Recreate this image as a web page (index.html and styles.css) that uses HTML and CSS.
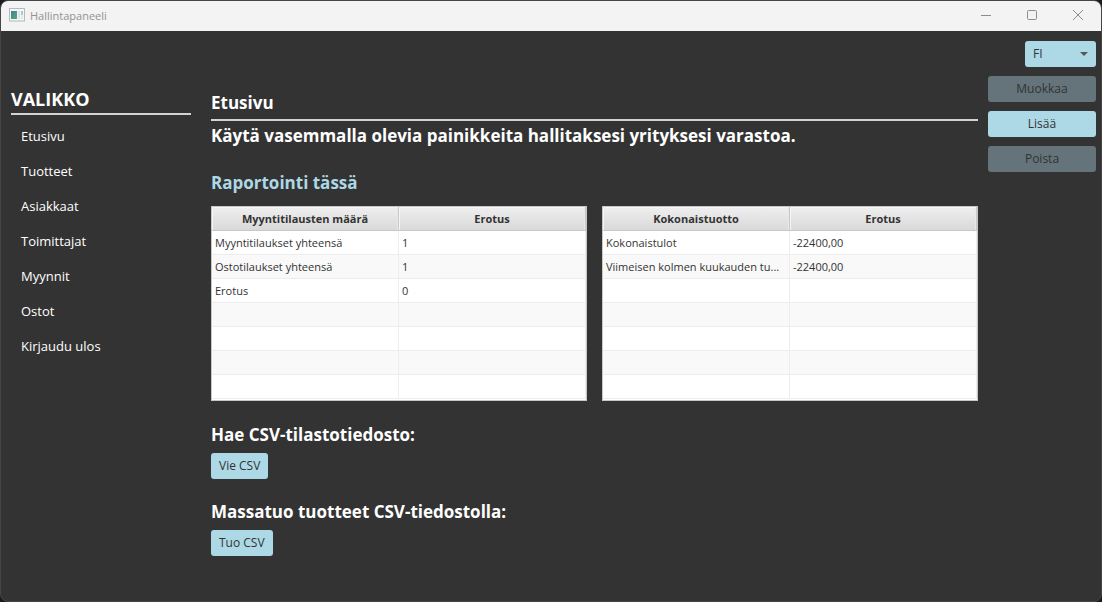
FILE: index.html
```html
<!DOCTYPE html>
<html lang="fi">
<head>
<meta charset="utf-8">
<meta name="viewport" content="width=device-width, initial-scale=1">
<title>Hallintapaneeli</title>
<link rel="stylesheet" href="styles.css">
</head>
<body>
<div class="window">
  <header class="titlebar">
    <svg class="app-icon" width="16" height="14" viewBox="0 0 16 14" aria-hidden="true">
      <defs>
        <linearGradient id="pane" x1="0" y1="0" x2="1" y2="1">
          <stop offset="0" stop-color="#4a7f9c"/>
          <stop offset="1" stop-color="#56a878"/>
        </linearGradient>
      </defs>
      <rect x="0.500" y="0.500" width="15" height="12.500" fill="#f4f6f7" stroke="#b4babd"/>
      <rect x="2" y="3" width="6" height="8" fill="url(#pane)"/>
      <rect x="9" y="3" width="2" height="8" fill="#dfe3e6"/>
      <rect x="12" y="3" width="2" height="4" fill="#a9cbd0"/>
      <rect x="12" y="7" width="2" height="4" fill="#e6e9ea"/>
    </svg>
    <span class="title">Hallintapaneeli</span>
    <div class="window-controls">
      <button class="window-button" type="button" aria-label="Pienennä">
        <svg width="12" height="12" viewBox="0 0 12 12"><path d="M1 5.500H11"/></svg>
      </button>
      <button class="window-button" type="button" aria-label="Suurenna">
        <svg width="12" height="12" viewBox="0 0 12 12"><rect x="1.500" y="0.500" width="9" height="9" rx="1"/></svg>
      </button>
      <button class="window-button" type="button" aria-label="Sulje">
        <svg width="12" height="12" viewBox="0 0 12 12"><path d="M1 0L11 10M11 0L1 10"/></svg>
      </button>
    </div>
  </header>

  <div class="content">
    <nav class="sidebar" aria-labelledby="menu-title">
      <h2 class="menu-title" id="menu-title">VALIKKO</h2>
      <ul class="menu">
        <li><a class="menu-link" href="#etusivu">Etusivu</a></li>
        <li><a class="menu-link" href="#tuotteet">Tuotteet</a></li>
        <li><a class="menu-link" href="#asiakkaat">Asiakkaat</a></li>
        <li><a class="menu-link" href="#toimittajat">Toimittajat</a></li>
        <li><a class="menu-link" href="#myynnit">Myynnit</a></li>
        <li><a class="menu-link" href="#ostot">Ostot</a></li>
        <li><a class="menu-link" href="#ulos">Kirjaudu ulos</a></li>
      </ul>
    </nav>

    <main class="main">
      <h1 class="heading page-title">Etusivu</h1>
      <p class="heading intro">Käytä vasemmalla olevia painikkeita hallitaksesi yrityksesi varastoa.</p>
      <h2 class="heading report-title">Raportointi tässä</h2>
      <div class="tables">
        <div class="table-frame">
          <table class="table">
            <thead><tr><th scope="col">Myyntitilausten määrä</th><th scope="col">Erotus</th></tr></thead>
            <tbody>
              <tr><td>Myyntitilaukset yhteensä</td><td>1</td></tr>
              <tr><td>Ostotilaukset yhteensä</td><td>1</td></tr>
              <tr><td>Erotus</td><td>0</td></tr>
              <tr><td></td><td></td></tr>
              <tr><td></td><td></td></tr>
              <tr><td></td><td></td></tr>
              <tr><td></td><td></td></tr>
            </tbody>
          </table>
        </div>
        <div class="table-frame">
          <table class="table">
            <thead><tr><th scope="col">Kokonaistuotto</th><th scope="col">Erotus</th></tr></thead>
            <tbody>
              <tr><td>Kokonaistulot</td><td>-22400,00</td></tr>
              <tr><td>Viimeisen kolmen kuukauden tu...</td><td>-22400,00</td></tr>
              <tr><td></td><td></td></tr>
              <tr><td></td><td></td></tr>
              <tr><td></td><td></td></tr>
              <tr><td></td><td></td></tr>
              <tr><td></td><td></td></tr>
            </tbody>
          </table>
        </div>
      </div>
      <section class="csv">
        <h2 class="heading">Hae CSV-tilastotiedosto:</h2>
        <button class="button" type="button">Vie CSV</button>
      </section>
      <section class="csv">
        <h2 class="heading">Massatuo tuotteet CSV-tiedostolla:</h2>
        <button class="button" type="button">Tuo CSV</button>
      </section>
    </main>

    <aside class="actions">
      <div class="language">
        <select class="button language-select" aria-label="Kieli">
          <option>FI</option>
        </select>
        <svg class="language-arrow" width="8" height="4" viewBox="0 0 8 4" aria-hidden="true"><path d="M0 0H8L4 4Z"/></svg>
      </div>
      <button class="button" type="button" disabled>Muokkaa</button>
      <button class="button" type="button">Lisää</button>
      <button class="button" type="button" disabled>Poista</button>
    </aside>
  </div>
</div>
</body>
</html>
```
FILE: styles.css
```css
* {
  box-sizing: border-box;
}

body {
  margin: 0;
  background: #1b1b1d;
  color: #333;
  font: 12px/16px "Open Sans", "Noto Sans", sans-serif;
}

h1, h2, p, ul {
  margin: 0;
  padding: 0;
}

.window {
  display: flex;
  flex-direction: column;
  min-height: 100vh;
  border: 1px solid #454545;
  border-radius: 8px;
  background: #333;
  overflow: hidden;
}

.titlebar {
  display: flex;
  align-items: center;
  height: 30px;
  padding-left: 8px;
  background: #f3f3f3;
  color: #929292;
}

.app-icon {
  margin-bottom: 2px;
}

.title {
  margin-left: 5px;
  font-size: 11px;
}

.window-controls {
  display: flex;
  margin-left: auto;
}

.window-button {
  display: flex;
  align-items: center;
  justify-content: center;
  width: 46px;
  height: 30px;
  padding: 0;
  border: 0;
  background: none;
}

.window-button svg {
  fill: none;
  stroke: #8c8c8c;
}

.content {
  display: grid;
  grid-template-columns: 180px minmax(0, 1fr) 108px;
  flex: 1;
  padding: 0 5px 10px 10px;
}

.sidebar {
  padding-top: 56px;
}

.menu-title {
  padding-bottom: 2px;
  border-bottom: 2px solid #d3d3d3;
  color: #fff;
  font-size: 18px;
  line-height: 24px;
}

.menu {
  padding: 4px 10px 0;
  list-style: none;
}

.menu-link {
  display: block;
  color: #fff;
  font-size: 13px;
  line-height: 35px;
  text-decoration: none;
}

.main {
  margin: 0 10px 0 20px;
  padding-top: 60px;
}

.heading {
  color: #fff;
  font-size: 17px;
  font-weight: 700;
  line-height: 24px;
}

.page-title {
  padding-bottom: 4px;
  border-bottom: 2px solid #d3d3d3;
}

.intro {
  padding-top: 3px;
}

.report-title {
  margin: 23px 0 11px;
  color: #add8e6;
}

.tables {
  display: grid;
  grid-template-columns: 1fr 1fr;
  gap: 15px;
}

.table-frame {
  padding-bottom: 1px;
  border: 1px solid #c8c8c8;
  background: #fff;
}

.table {
  width: 100%;
  table-layout: fixed;
  border-spacing: 0;
  font-size: 11px;
}

.table th,
.table td {
  height: 24px;
  padding: 0 3px;
  overflow: hidden;
  text-overflow: ellipsis;
  white-space: nowrap;
}

.table th {
  padding-top: 1px;
  border-right: 1px solid #c8c8c8;
  border-bottom: 1px solid #c8c8c8;
  background: linear-gradient(#efefef, #d9d9d9);
  box-shadow: inset 1px 1px #f5f5f5, inset -1px 0 #e8e8e8;
}

.table td {
  border-right: 1px solid #ededed;
  border-bottom: 1px solid #ededed;
}

.table tbody tr:nth-child(even) {
  background: #f9f9f9;
}

.csv {
  margin-top: 22px;
}

.csv + .csv {
  margin-top: 21px;
}

.csv .button {
  display: block;
  margin-top: 6px;
}

.button {
  height: 26px;
  padding: 0 8px;
  border: 0;
  border-radius: 3px;
  background: #add8e6;
  color: #333;
  font: inherit;
}

.button:disabled {
  background: #64747a;
}

.actions {
  display: flex;
  flex-direction: column;
  gap: 9px;
  padding-top: 10px;
}

.language {
  position: relative;
  align-self: flex-end;
  width: 71px;
  height: 26px;
}

.language-select {
  width: 100%;
  appearance: none;
}

.language-arrow {
  position: absolute;
  top: 11px;
  right: 8px;
  fill: #555;
  pointer-events: none;
}
```
